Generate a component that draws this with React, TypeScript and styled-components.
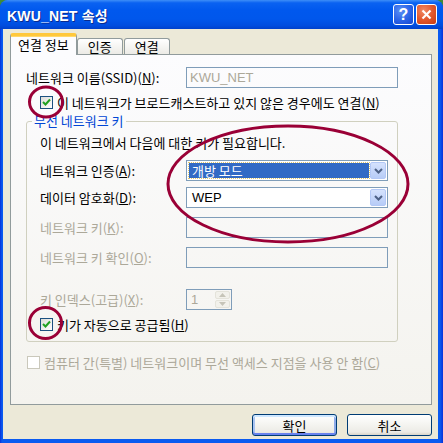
import React from "react";
import styled, { createGlobalStyle, css } from "styled-components";

const FONT = `"Noto Sans CJK KR", "Noto Sans", sans-serif`;

const Global = createGlobalStyle`
  html, body { margin: 0; padding: 0; background: #3F8A3A; }
  body { width: 443px; height: 443px; overflow: hidden; }
  #root { width: 443px; height: 443px; }
  * { box-sizing: border-box; }
`;

const Window = styled.div`
  position: relative;
  width: 443px;
  height: 443px;
  display: flex;
  flex-direction: column;
  background: linear-gradient(to right, #0831D9 0px, #0A5AF0 2px, #0A5AF0 calc(100% - 3px), #0831D9 100%);
  border-radius: 8px 8px 0 0;
  overflow: hidden;
  font-family: ${FONT};
  font-size: 13px;
  color: #000;
`;

const TitleBar = styled.div`
  height: 29px;
  flex: none;
  display: flex;
  align-items: center;
  gap: 2px;
  padding: 0 6px 0 7px;
  background: linear-gradient(
    to bottom,
    #3D8EF8 0%,
    #0A62F1 10%,
    #0058EE 35%,
    #0057EC 65%,
    #004DDF 88%,
    #0041CB 100%
  );
`;

const Title = styled.div`
  flex: 1;
  color: #fff;
  font-family: "Liberation Sans", ${FONT};
  font-weight: bold;
  font-size: 14px;
  letter-spacing: 0.2px;
  text-shadow: 1px 1px 0 #0B2A8C;
`;

const CaptionButton = styled.div<{ $kind: "help" | "close" }>`
  width: 21px;
  height: 21px;
  border: 1px solid #fff;
  border-radius: 3px;
  display: flex;
  align-items: center;
  justify-content: center;
  color: #fff;
  font-family: "Liberation Sans", sans-serif;
  font-weight: bold;
  font-size: 16px;
  ${(p) =>
    p.$kind === "help"
      ? css`
          background: radial-gradient(circle at 35% 30%, #5C8FF4 0%, #2D66E8 50%, #1346D2 100%);
        `
      : css`
          background: radial-gradient(circle at 35% 30%, #F08A65 0%, #E2582E 50%, #C63B12 100%);
        `}
`;

const Body = styled.div`
  flex: 1;
  margin: 0 5px 4px 3px;
  background: #ECE9D8;
  display: flex;
  flex-direction: column;
  padding: 4px 6px 3px 7px;
`;

const TabRow = styled.div`
  height: 21px;
  flex: none;
  display: flex;
  align-items: flex-end;
  position: relative;
  z-index: 1;
`;

const Tab = styled.div<{ $active?: boolean; $gap?: number }>`
  display: flex;
  align-items: center;
  justify-content: center;
  border: 1px solid #919B9C;
  border-bottom: none;
  border-radius: 3px 3px 0 0;
  margin-left: ${(p) => p.$gap ?? 0}px;
  white-space: nowrap;
  ${(p) =>
    p.$active
      ? css`
          height: 22px;
          margin-bottom: -1px;
          padding: 0 7px 2px 7px;
          background: #FCFCFE;
          border-top: 3px solid #FFC83C;
          box-shadow: inset 0 1px 0 #FFD86A;
        `
      : css`
          height: 16px;
          padding: 0 10px 0 10px;
          background: linear-gradient(to bottom, #FFFFFF, #ECEBE6);
        `}
`;

const Panel = styled.div`
  height: 351px;
  flex: none;
  border: 1px solid #919B9C;
  background: linear-gradient(to bottom, #FCFCFE, #F4F3EE);
  padding: 12px 33px 0 15px;
  display: flex;
  flex-direction: column;
`;

const FieldRow = styled.div<{ $labelWidth: number; $gap?: number }>`
  display: grid;
  grid-template-columns: ${(p) => p.$labelWidth}px 1fr;
  align-items: center;
  margin-top: ${(p) => p.$gap ?? 0}px;
`;

const Label = styled.div<{ $disabled?: boolean; $gap?: number }>`
  line-height: 14px;
  white-space: nowrap;
  margin-top: ${(p) => p.$gap ?? 0}px;
  color: ${(p) => (p.$disabled ? "#ACA899" : "#000")};
`;

const TextBox = styled.div<{ $disabled?: boolean }>`
  height: 21px;
  width: 100%;
  border: 1px solid #7F9DB9;
  background: ${(p) => (p.$disabled ? "transparent" : "#fff")};
  color: ${(p) => (p.$disabled ? "#ACA899" : "#000")};
  font-family: "Liberation Sans", ${FONT};
  font-size: 13px;
  display: flex;
  align-items: center;
  padding-left: 3px;
`;

const Combo = styled.div`
  height: 21px;
  width: 100%;
  border: 1px solid #7F9DB9;
  background: #fff;
  display: flex;
  align-items: center;
  padding: 1px 1px 1px 2px;
  gap: 1px;
`;

const ComboValue = styled.div<{ $focused?: boolean; $latin?: boolean }>`
  flex: 1;
  height: 15px;
  display: flex;
  align-items: center;
  padding-left: 3px;
  font-size: 13px;
  font-family: ${(p) => (p.$latin ? `"Liberation Sans", ${FONT}` : FONT)};
  ${(p) =>
    p.$focused &&
    css`
      background: #316AC5;
      color: #fff;
      outline: 1px dotted #E3C86A;
    `}
`;

const DropButton = styled.div`
  width: 16px;
  height: 17px;
  border: 1px solid #B3C8F6;
  border-radius: 2px;
  background: linear-gradient(to bottom, #D5E2FD, #B7CCF7);
  display: flex;
  align-items: center;
  justify-content: center;
`;

const CheckRow = styled.div<{ $indent: number; $gap: number; $disabled?: boolean }>`
  display: flex;
  align-items: center;
  gap: 4px;
  height: 13px;
  margin-top: ${(p) => p.$gap}px;
  padding-left: ${(p) => p.$indent}px;
  color: ${(p) => (p.$disabled ? "#ACA899" : "#000")};
  white-space: nowrap;
`;

const CheckBox = styled.div<{ $disabled?: boolean }>`
  width: 13px;
  height: 13px;
  flex: none;
  border: 1px solid ${(p) => (p.$disabled ? "#CAC8BB" : "#1C5180")};
  background: ${(p) => (p.$disabled ? "#fff" : "linear-gradient(135deg, #DCDCD7, #FFFFFF)")};
  display: flex;
  align-items: center;
  justify-content: center;
`;

const GroupBox = styled.fieldset`
  margin: 5px 0 0 0;
  padding: 0 9px 10px 13px;
  min-inline-size: 0;
  border: 1px solid #D0D0BF;
  border-radius: 3px;
  display: flex;
  flex-direction: column;
`;

const Legend = styled.legend`
  padding: 0 2px;
  margin-left: -8px;
  line-height: 14px;
  color: #0046D5;
`;

const Spinner = styled.div`
  width: 46px;
  height: 21px;
  border: 1px solid #7F9DB9;
  display: flex;
  align-items: center;
  padding: 1px 1px 1px 4px;
  color: #ACA899;
  font-family: "Liberation Sans", sans-serif;
  font-size: 13px;
`;

const SpinValue = styled.div`
  flex: 1;
`;

const SpinButtons = styled.div`
  width: 15px;
  height: 17px;
  display: flex;
  flex-direction: column;
  gap: 1px;
`;

const SpinPart = styled.div`
  flex: 1;
  background: #F2F1EB;
  border: 1px solid #E4E3DA;
  border-radius: 2px;
  display: flex;
  align-items: center;
  justify-content: center;
`;

const ButtonRow = styled.div`
  margin-top: 9px;
  display: flex;
  justify-content: flex-end;
  gap: 10px;
`;

const Button = styled.button<{ $default?: boolean }>`
  width: 85px;
  height: 22px;
  border: 1px solid #003C74;
  border-radius: 3px;
  padding: 0;
  font-family: ${FONT};
  font-size: 13px;
  color: #000;
  background: linear-gradient(to bottom, #FFFFFF 0%, #F5F5F1 45%, #ECEBE6 85%, #D8D3C8 100%);
  ${(p) =>
    p.$default &&
    css`
      box-shadow: inset 0 2px 0 #CEE7FF, inset 0 -2px 0 #6982EE, inset 2px 0 0 #A9C3F1, inset -2px 0 0 #8EABE9;
    `}
`;

const Annotations = styled.svg`
  position: absolute;
  left: 0;
  top: 0;
  width: 443px;
  height: 443px;
  pointer-events: none;
  z-index: 5;
`;

const Check = () => (
  <svg width="9" height="9" viewBox="0 0 9 9">
    <polyline points="1,4 3.5,6.5 8,1.5" fill="none" stroke="#21A121" strokeWidth="2" />
  </svg>
);

const Chevron = ({ color }: { color: string }) => (
  <svg width="9" height="6" viewBox="0 0 9 6">
    <polyline points="1,1 4.5,4.5 8,1" fill="none" stroke={color} strokeWidth="2" />
  </svg>
);

const Arrow = ({ up }: { up?: boolean }) => (
  <svg width="7" height="4" viewBox="0 0 7 4">
    <polygon points={up ? "3.5,0 7,4 0,4" : "0,0 7,0 3.5,4"} fill="#C6C4B8" />
  </svg>
);

export default function App() {
  return (
    <>
      <Global />
      <Window>
        <TitleBar>
          <Title>KWU_NET 속성</Title>
          <CaptionButton $kind="help">?</CaptionButton>
          <CaptionButton $kind="close">
            <svg width="11" height="11" viewBox="0 0 11 11">
              <line x1="1.5" y1="1.5" x2="9.5" y2="9.5" stroke="#fff" strokeWidth="2.2" />
              <line x1="9.5" y1="1.5" x2="1.5" y2="9.5" stroke="#fff" strokeWidth="2.2" />
            </svg>
          </CaptionButton>
        </TitleBar>
        <Body>
          <TabRow>
            <Tab $active>연결 정보</Tab>
            <Tab>인증</Tab>
            <Tab $gap={1}>연결</Tab>
          </TabRow>
          <Panel>
            <FieldRow $labelWidth={160}>
              <Label>
                네트워크 이름(SSID)(<u>N</u>):
              </Label>
              <TextBox $disabled>KWU_NET</TextBox>
            </FieldRow>
            <CheckRow $indent={14} $gap={8}>
              <CheckBox>
                <Check />
              </CheckBox>
              <span>
                이 네트워크가 브로드캐스트하고 있지 않은 경우에도 연결(<u>N</u>)
              </span>
            </CheckRow>
            <GroupBox>
              <Legend>무선 네트워크 키</Legend>
              <Label $gap={8}>이 네트워크에서 다음에 대한 키가 필요합니다.</Label>
              <FieldRow $labelWidth={146} $gap={10}>
                <Label>
                  네트워크 인증(<u>A</u>):
                </Label>
                <Combo>
                  <ComboValue $focused>개방 모드</ComboValue>
                  <DropButton>
                    <Chevron color="#4D6185" />
                  </DropButton>
                </Combo>
              </FieldRow>
              <FieldRow $labelWidth={146} $gap={6}>
                <Label>
                  데이터 암호화(<u>D</u>):
                </Label>
                <Combo>
                  <ComboValue $latin>WEP</ComboValue>
                  <DropButton>
                    <Chevron color="#4D6185" />
                  </DropButton>
                </Combo>
              </FieldRow>
              <FieldRow $labelWidth={146} $gap={9}>
                <Label $disabled>
                  네트워크 키(<u>K</u>):
                </Label>
                <TextBox $disabled />
              </FieldRow>
              <FieldRow $labelWidth={146} $gap={9}>
                <Label $disabled>
                  네트워크 키 확인(<u>O</u>):
                </Label>
                <TextBox $disabled />
              </FieldRow>
              <FieldRow $labelWidth={146} $gap={21}>
                <Label $disabled>
                  키 인덱스(고급)(<u>X</u>):
                </Label>
                <Spinner>
                  <SpinValue>1</SpinValue>
                  <SpinButtons>
                    <SpinPart>
                      <Arrow up />
                    </SpinPart>
                    <SpinPart>
                      <Arrow />
                    </SpinPart>
                  </SpinButtons>
                </Spinner>
              </FieldRow>
              <CheckRow $indent={0} $gap={8}>
                <CheckBox>
                  <Check />
                </CheckBox>
                <span>
                  키가 자동으로 공급됨(<u>H</u>)
                </span>
              </CheckRow>
            </GroupBox>
            <CheckRow $indent={1} $gap={14} $disabled>
              <CheckBox $disabled />
              <span>
                컴퓨터 간(특별) 네트워크이며 무선 액세스 지점을 사용 안 함(<u>C</u>)
              </span>
            </CheckRow>
          </Panel>
          <ButtonRow>
            <Button $default>확인</Button>
            <Button>취소</Button>
          </ButtonRow>
        </Body>
        <Annotations viewBox="0 0 443 443">
          <g fill="none" stroke="#9A0036" strokeWidth="3">
            <ellipse cx="46" cy="102" rx="16.5" ry="15" />
            <ellipse cx="288" cy="184" rx="120" ry="58" />
            <ellipse cx="45.5" cy="323" rx="16" ry="15.5" />
          </g>
        </Annotations>
      </Window>
    </>
  );
}
